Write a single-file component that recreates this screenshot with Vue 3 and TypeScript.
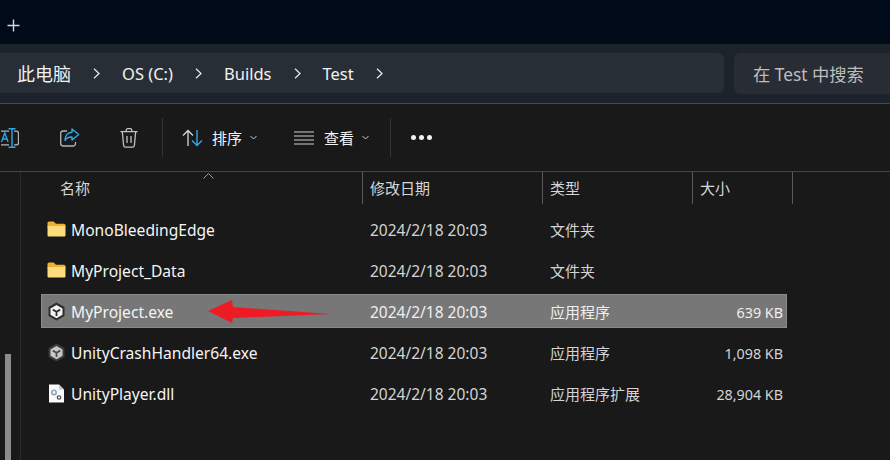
<script setup lang="ts">
interface FileRow {
  name: string
  date: string
  kind: string
  size: string
  icon: 'folder' | 'unity' | 'crash' | 'dll'
  selected?: boolean
}

const crumbs: string[] = ['此电脑', 'OS (C:)', 'Builds', 'Test']

const rows: FileRow[] = [
  { name: 'MonoBleedingEdge', date: '2024/2/18 20:03', kind: '文件夹', size: '', icon: 'folder' },
  { name: 'MyProject_Data', date: '2024/2/18 20:03', kind: '文件夹', size: '', icon: 'folder' },
  { name: 'MyProject.exe', date: '2024/2/18 20:03', kind: '应用程序', size: '639 KB', icon: 'unity', selected: true },
  { name: 'UnityCrashHandler64.exe', date: '2024/2/18 20:03', kind: '应用程序', size: '1,098 KB', icon: 'crash' },
  { name: 'UnityPlayer.dll', date: '2024/2/18 20:03', kind: '应用程序扩展', size: '28,904 KB', icon: 'dll' }
]
</script>

<template>
  <div class="window">
    <div class="titlebar">
      <svg class="plus" width="13" height="13" viewBox="0 0 13 13">
        <path d="M6.5 0.5v12M0.5 6.5h12" stroke="#d8d8d8" stroke-width="1.4" fill="none" />
      </svg>
    </div>

    <div class="addressbar">
      <div class="crumbs">
        <template v-for="c in crumbs" :key="c">
          <span class="crumb">{{ c }}</span>
          <svg class="sep-chevron" width="7" height="11" viewBox="0 0 7 11">
            <path d="M1 0.8l5 4.7-5 4.7" stroke="#e4e6e8" stroke-width="1.3" fill="none" />
          </svg>
        </template>
      </div>
      <div class="search">在 Test 中搜索</div>
    </div>

    <div class="toolbar">
      <svg class="tool-rename" width="19" height="20" viewBox="0 0 19 20">
        <path d="M14 3.200h2.500a2 2 0 0 1 2 2v9.600a2 2 0 0 1-2 2H14" stroke="#b5b5b5" stroke-width="1.300" fill="none" />
        <path d="M9 3.200H1M9 16.800H1" stroke="#b5b5b5" stroke-width="1.300" fill="none" />
        <path d="M8.500 0.700h7M8.500 19.300h7M12 0.700v18.600" stroke="#35a7e6" stroke-width="1.400" fill="none" />
        <path d="M1.500 14l3.300-9 3.300 9M2.700 11h4.200" stroke="#35a7e6" stroke-width="1.300" fill="none" />
      </svg>
      <svg class="tool-share" width="20" height="19" viewBox="0 0 20 19">
        <path d="M7 3H3a2.500 2.500 0 0 0-2.300 2.500v10A2.500 2.500 0 0 0 3 18h10a2.500 2.500 0 0 0 2.500-2.500V14" stroke="#b5b5b5" stroke-width="1.300" fill="none" />
        <path d="M12 1l6.700 5.500L12 12V9c-3.500-.2-5.500 1-7 3.500C5 8 7.500 4.500 12 4.200z" stroke="#35a7e6" stroke-width="1.400" fill="none" stroke-linejoin="round" />
      </svg>
      <svg class="tool-trash" width="18" height="20" viewBox="0 0 18 20">
        <path d="M0.500 3.700h17M6.200 3.500V2.200A1.500 1.500 0 0 1 7.700 0.700h2.600a1.500 1.500 0 0 1 1.500 1.500v1.300M2.300 3.700l1.300 13.500a2 2 0 0 0 2 1.900h6.800a2 2 0 0 0 2-1.900L15.700 3.700M7 8v7M11 8v7" stroke="#c2c2c2" stroke-width="1.300" fill="none" />
      </svg>
      <span class="tool-sep first"></span>
      <svg class="tool-sort" width="21" height="18" viewBox="0 0 21 18">
        <path d="M6 17V1.500M1 6.500l5-5 5 5" stroke="#d6d6d6" stroke-width="1.300" fill="none" />
        <path d="M15 1v15.500M10 11.500l5 5 5-5" stroke="#35a7e6" stroke-width="1.400" fill="none" />
      </svg>
      <span class="tool-label sort-label">排序</span>
      <svg class="drop" width="7" height="5" viewBox="0 0 7 5"><path d="M0.500 1l3 3 3-3" stroke="#c8c8c8" stroke-width="1" fill="none" /></svg>
      <svg class="tool-view" width="20" height="14" viewBox="0 0 20 14">
        <path d="M0 1h20M0 5h20M0 9h20M0 13h20" stroke="#cfcfcf" stroke-width="1.200" fill="none" />
      </svg>
      <span class="tool-label view-label">查看</span>
      <svg class="drop" width="7" height="5" viewBox="0 0 7 5"><path d="M0.500 1l3 3 3-3" stroke="#c8c8c8" stroke-width="1" fill="none" /></svg>
      <span class="tool-sep second"></span>
      <span class="dots"><i></i><i></i><i></i></span>
    </div>

    <div class="main">
      <aside class="side"><div class="thumb"></div></aside>
      <section class="content">
        <div class="header">
          <div class="hcol name-col">
            名称
            <svg class="sort-caret" width="11" height="6" viewBox="0 0 11 6"><path d="M0.500 5.500l5-5 5 5" stroke="#9a9a9a" stroke-width="1" fill="none" /></svg>
          </div>
          <div class="hcol date-col">修改日期</div>
          <div class="hcol kind-col">类型</div>
          <div class="hcol size-col">大小</div>
        </div>
        <div class="list">
          <div v-for="r in rows" :key="r.name" class="row" :class="{ selected: r.selected }">
            <div class="cell-name">
              <svg v-if="r.icon === 'folder'" class="icon" width="19" height="16" viewBox="0 0 19 16">
                <path d="M0.500 2A1.500 1.500 0 0 1 2 0.500h4.500l2.500 2.300H17A1.500 1.500 0 0 1 18.500 4.300V6H0.500z" fill="#f0b030" />
                <path d="M0.500 5h18v9.300a1.200 1.200 0 0 1-1.200 1.200H1.700A1.200 1.200 0 0 1 0.500 14.300z" fill="#fddc7c" />
              </svg>
              <svg v-else-if="r.icon === 'unity'" class="icon" width="18" height="19" viewBox="0 0 18 19">
                <path d="M9 0.500l8 4.400v9.200l-8 4.400-8-4.400V4.900z" fill="#2e2e2e" />
                <path d="M9 3l6 3.400v6.400L9 16.200 3 12.800V6.400z" fill="#f2f2f2" />
                <path d="M9 9.700V14M9 9.700L5.300 7.600M9 9.700l3.700-2.100" stroke="#2e2e2e" stroke-width="1.800" fill="none" />
              </svg>
              <svg v-else-if="r.icon === 'crash'" class="icon" width="18" height="19" viewBox="0 0 18 19">
                <path d="M9 0.500l8 4.400v9.200l-8 4.400-8-4.400V4.900z" fill="#3c3c3c" />
                <path d="M9 3l6 3.400v6.400L9 16.200 3 12.800V6.400z" fill="#c8c8c8" />
                <path d="M9 9.700V14M9 9.700L5.300 7.600M9 9.700l3.700-2.100" stroke="#4a4a4a" stroke-width="1.800" fill="none" />
              </svg>
              <svg v-else class="icon" width="16" height="19" viewBox="0 0 16 19">
                <path d="M0.500 0.500h10l5 5v13h-15z" fill="#fafafa" />
                <path d="M10.500 0.500v5h5z" fill="#c4c4c4" />
                <circle cx="5.500" cy="8.500" r="2.200" fill="none" stroke="#8ea2bb" stroke-width="1.500" />
                <circle cx="10.500" cy="13.500" r="1.700" fill="none" stroke="#555" stroke-width="1.300" />
              </svg>
              <span class="fname">{{ r.name }}</span>
            </div>
            <div class="cell-date">{{ r.date }}</div>
            <div class="cell-kind">{{ r.kind }}</div>
            <div class="cell-size">{{ r.size }}</div>
          </div>
        </div>
      </section>
    </div>

    <svg class="arrow" width="124" height="25" viewBox="0 0 124 25">
      <path d="M0 12L24 1 25 8 123 15 25 19 24 24z" fill="#ed1c24" />
    </svg>
  </div>
</template>

<style scoped>
.window {
  position: relative;
  width: 890px;
  height: 460px;
  overflow: hidden;
  display: flex;
  flex-direction: column;
  background: #191919;
  color: #f2f2f2;
  font-family: "Noto Sans", "Noto Sans CJK SC", sans-serif;
  font-size: 14px;
}
.titlebar {
  height: 44px;
  flex: none;
  background: #000a18;
  display: flex;
  align-items: center;
  padding-left: 7px;
  box-sizing: border-box;
}
.plus { margin-top: 6px; }
.addressbar {
  height: 60px;
  flex: none;
  box-sizing: border-box;
  background: #1c232b;
  border-bottom: 1px solid #4a4a4a;
  padding: 9px 0;
  display: flex;
  gap: 10px;
}
.crumbs {
  width: 724px;
  height: 40px;
  flex: none;
  box-sizing: border-box;
  background: #282e36;
  border-radius: 0 6px 6px 0;
  display: flex;
  align-items: center;
  padding-left: 17px;
  font-size: 16.5px;
}
.crumb { color: #f2f2f2; }
.crumb:first-child { font-size: 18px; }
.sep-chevron { margin: 1px 22px 0 22px; flex: none; }
.search {
  flex: 1;
  height: 41px;
  box-sizing: border-box;
  background: #282c34;
  border-radius: 6px 0 0 6px;
  padding-left: 19px;
  display: flex;
  align-items: center;
  font-size: 17.3px;
  color: #bdbdbd;
}
.toolbar {
  height: 68px;
  flex: none;
  box-sizing: border-box;
  display: flex;
  align-items: center;
  border-bottom: 1px solid #454545;
}
.tool-share { margin-left: 41px; }
.tool-trash { margin-left: 40px; }
.tool-sep {
  width: 1px;
  height: 39px;
  background: #333;
  flex: none;
}
.tool-sep.first { margin-left: 24px; }
.tool-sep.second { margin-left: 21px; }
.tool-sort { margin-left: 19px; }
.tool-label { font-size: 15px; color: #f2f2f2; }
.sort-label { margin-left: 9px; }
.view-label { margin-left: 10px; }
.drop { margin-left: 8px; flex: none; }
.tool-view { margin-left: 37px; }
.dots {
  display: flex;
  gap: 3px;
  margin-left: 20px;
}
.dots i {
  display: block;
  width: 5px;
  height: 5px;
  border-radius: 50%;
  background: #f0f0f0;
}
.main {
  flex: 1;
  display: flex;
  min-height: 0;
}
.side {
  width: 21px;
  flex: none;
  box-sizing: border-box;
  border-right: 1px solid #2a2a2a;
  padding-top: 182px;
  padding-left: 5px;
}
.thumb {
  width: 6px;
  height: 110px;
  background: #8c8c8c;
}
.content {
  flex: 1;
  display: flex;
  flex-direction: column;
  min-width: 0;
}
.header {
  display: flex;
  height: 32px;
  flex: none;
  font-size: 15px;
  color: #d6d6d6;
}
.hcol {
  position: relative;
  box-sizing: border-box;
  border-right: 1px solid #5a5a5a;
  display: flex;
  align-items: center;
  padding-left: 7px;
  padding-bottom: 2px;
  flex: none;
}
.name-col { width: 342px; padding-left: 39px; }
.date-col { width: 180px; }
.kind-col { width: 150px; }
.size-col { width: 100px; }
.sort-caret { position: absolute; left: 182px; top: 1px; }
.list {
  display: flex;
  flex-direction: column;
  gap: 7px;
  padding: 8px 0 0 20px;
}
.row {
  width: 746px;
  height: 34px;
  box-sizing: border-box;
  display: flex;
  align-items: center;
  font-size: 14px;
  border: 1px solid transparent;
}
.row.selected {
  background: #777;
  border-color: #8a8a8a;
}
.cell-name {
  width: 328px;
  flex: none;
  display: flex;
  align-items: center;
  padding-left: 5px;
  box-sizing: border-box;
}
.icon { width: 19px; flex: none; }
.fname { margin-left: 5px; padding-top: 2px; font-size: 15.6px; color: #f4f4f4; }
.cell-date { width: 180px; flex: none; padding-top: 2px; color: #d4d4d4; font-size: 15.5px; }
.cell-kind { width: 150px; flex: none; color: #d4d4d4; font-size: 15px; }
.cell-size { width: 83px; flex: none; padding-top: 2px; text-align: right; color: #d4d4d4; font-size: 14.3px; }
.selected .cell-date,
.selected .cell-kind,
.selected .cell-size { color: #efefef; }
.arrow {
  position: absolute;
  left: 208px;
  top: 299px;
}
</style>
